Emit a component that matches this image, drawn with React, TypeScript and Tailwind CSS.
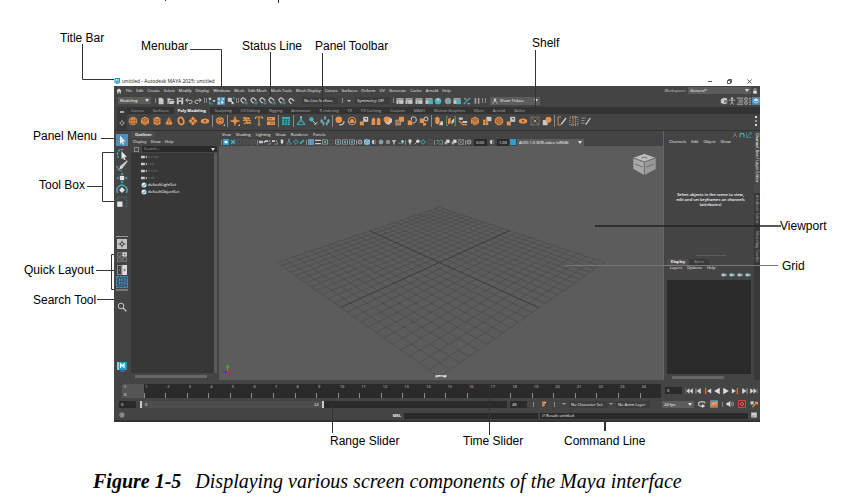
import React from 'react';

const menus = [
  'File', 'Edit', 'Create', 'Select', 'Modify', 'Display', 'Windows', 'Mesh', 'Edit Mesh', 'Mesh Tools',
  'Mesh Display', 'Curves', 'Surfaces', 'Deform', 'UV', 'Generate', 'Cache', 'Arnold', 'Help',
];

const shelfTabs = [
  'Curves', 'Surfaces', 'Poly Modeling', 'Sculpting', 'UV Editing', 'Rigging', 'Animation', 'Rendering',
  'FX', 'FX Caching', 'Custom', 'MASH', 'Motion Graphics', 'XGen', 'Arnold', 'Bullet',
];

const shelfIcons = [
  'sphere', 'cube', 'cylinder', 'cone', 'torus', 'plane', 'disc', '|', 'platonic', '|', 'star', 'curves', 'type',
  'svg', '|', 'table', '|', 'rig', 'joint', 'cluster', '|', 'combine', 'separate', 'extract', 'mirror', 'smooth',
  'boxes', 'bool', 'boolDiff', '|', 'extrude', 'bridge', 'bevel', 'cube', 'merge', 'wheel', 'extract', 'disc',
  'target', 'ballBox', '|', 'cut', 'loop', 'draw',
];

const statusIcons = [
  '|', 'file', 'folder', 'save', 'undo', 'redo', '|', '|', 'hier', '*object', 'component', '|', '|',
  'magnet', 'magnet', 'magnet', 'magnet', 'magnet', 'magnetGrey',
];
const renderIcons = ['|', 'clap', 'clap', 'clap', 'clapTeal', 'globe', 'globeGrey', 'clapTeal', 'brush', 'pause', '|', '|'];

const viewIcons = [
  '|', '*camera', 'xbox', 'dim', 'dim', 'dim', '|', 'cam', 'camTeal', 'camTeal', 'pin', 'rig', 'diamond', 'pencil', '|',
  '*grid', 'film', 'gate', 'dim', 'gate', 'gate', 'gate', '|', 'ring', '*wire', 'half', 'globeGrey', 'ball', 'light',
  'shadow', '|', 'lamp', 'blur', 'diamond', 'dim', '|', 'brush', '|', 'copy', 'copy', 'xgrey', '|', 'ring',
];

const outlinerItems = [
  { name: 'persp', dim: true },
  { name: 'top', dim: true },
  { name: 'front', dim: true },
  { name: 'side', dim: true },
  { name: 'defaultLightSet', dim: false },
  { name: 'defaultObjectSet', dim: false },
];

const O = '#e8914a';
const G = '#c8c8c8';
const T = '#45b5c4';

const glyphs: Record<string, React.ReactNode> = {
  sphere: <><circle cx="5" cy="5" r="4.3" fill={O} /><path d="M1 4q4 2 8 0M1.6 7q3.4 1.5 6.8 0M5 .7v8.6M3 1.2q-1.4 4 0 7.6M7 1.2q1.4 4 0 7.6" stroke="#75502f" strokeWidth=".6" fill="none" /></>,
  cube: <><path d="M5 .6 9 2.7v4.6L5 9.4 1 7.3V2.7z" fill={O} /><path d="M1 2.7 5 5l4-2.3M5 5v4.4M3 1.6l4 2.3v4.4M7 1.6 3 3.9v4.4" stroke="#75502f" strokeWidth=".6" fill="none" /></>,
  cylinder: <><path d="M1.5 2.2q3.5-3 7 0v5.6q-3.5 3-7 0z" fill={O} /><path d="M1.5 2.5q3.5 2.5 7 0M1.5 5q3.5 2.5 7 0M4 3.7v5.7M6.2 3.7v5.7" stroke="#75502f" strokeWidth=".6" fill="none" /></>,
  cone: <><path d="M5 .8 8.6 7.8q-3.6 2.4-7.2 0z" fill={O} /><path d="M3 4.9q2 1.4 4 0M5 1v8" stroke="#75502f" strokeWidth=".6" fill="none" /></>,
  torus: <ellipse cx="5" cy="5" rx="2.6" ry="3.6" fill="none" stroke={O} strokeWidth="1.8" transform="rotate(-18 5 5)" />,
  plane: <><path d="M5 .6 9.4 5 5 9.4.6 5z" fill={O} /><path d="m2.8 2.8 4.4 4.4M7.2 2.8 2.8 7.2" stroke="#5a432f" strokeWidth=".7" /></>,
  disc: <><ellipse cx="5" cy="5" rx="4.2" ry="2.6" fill={O} /><circle cx="5" cy="5" r="1.1" fill="#5a432f" /></>,
  platonic: <><path d="M5 .4 9 2.7 8.5 7 5 9 1.5 7 1 2.7z" fill={O} /><path d="m5 .4-2 4 2 4.6 2-4zM1 2.7l2 1.7h4l2-1.7" stroke="#75502f" strokeWidth=".6" fill="none" /><path d="M10 8v2H8z" fill={G} /></>,
  star: <><path d="M5 .5 6 4l3.5 1L6 6 5 9.5 4 6 .5 5 4 4z" fill={O} stroke={O} strokeWidth=".8" /><path d="M10 8v2H8z" fill={G} /></>,
  curves: <path d="M1 2h4q2 0 3 1M1 4.6q4-1.6 8 .6M2 8q3-2.6 7-.6M2 1l4 7" stroke={O} strokeWidth="1.3" fill="none" />,
  type: <path d="M1.6 1h6.8v2M1.6 1v2M5 1v8M3.6 9h2.8" stroke={O} strokeWidth="1.2" fill="none" />,
  svg: <><path d="M1 1h8v3.4H1zM1 5.6h8V9H1z" fill={O} /><path d="M2 2.7h4M4 7.3h4" stroke="#75502f" strokeWidth=".8" /></>,
  table: <><path d="M1 1h8v8H1z" fill={T} /><path d="M1 3.2h8M1 5.2h8M1 7.2h8M3.7 3v6M6.3 3v6" stroke="#2c4a52" strokeWidth=".7" /></>,
  rig: <><path d="M5 1v4L1 8.5M5 5l4 3.5M1 8.5h8L5 2.6z" stroke={T} strokeWidth=".8" fill="none" /><circle cx="5" cy="1.2" r="1" fill={G} /></>,
  joint: <><circle cx="3.4" cy="3.2" r="2.2" fill={T} /><path d="m5 5 3 3.6M9.4 6l-3 3" stroke={G} strokeWidth="1" /></>,
  cluster: <path d="m5 0 1 2-1 2-1-2zM1.6 3l1.2 2-1.2 2L.4 5zM8.4 3l1.2 2-1.2 2-1.2-2zM3.4 5.6l1 2-1 2-1-2zM6.8 5.6l1 2-1 2-1-2z" fill={T} stroke={G} strokeWidth=".3" />,
  combine: <><circle cx="3.8" cy="3.8" r="3.3" fill={O} /><path d="M4.4 8.6A3.4 3.4 0 0 0 9 5.2" stroke={G} strokeWidth="1.2" fill="none" /></>,
  separate: <><circle cx="5" cy="5" r="3.8" stroke={O} strokeWidth="1" fill="none" /><circle cx="5" cy="5" r="2" fill={O} /><path d="M1 6h8" stroke={G} strokeWidth=".6" /></>,
  extract: <><path d="M4.2.8h5v5h-5z" fill={G} /><path d="M.8 5.4h4v4h-4z" fill={O} /><path d="M5.4 2h2.4v2.6z" fill="#555" /></>,
  mirror: <path d="M.6 3 3 1.4 4.2 3v6H.6zM5.8 3 7 1.4 9.4 3v6H5.8z" fill={O} />,
  smooth: <><path d="M2 3.6 6 1l3 2v3L5.6 9 2 7z" fill={G} /><circle cx="3.6" cy="3.6" r="3" fill={O} /></>,
  boxes: <><path d="M4 .8h5v5H4z" fill={O} /><path d="M.8 4h4.8v5H.8z" fill="#a5703f" stroke={G} strokeWidth=".5" /></>,
  bool: <><path d="M.8 4.4h4.4v4.8H.8z" fill={O} /><path d="M4.4 4V1.4L7 .7l2.2 1.6v3L7 7H5.6" fill="none" stroke={G} strokeWidth="1" /></>,
  boolDiff: <><path d="M.8 2.4h4.4V7H.8zM4 7h3v2.4H4z" fill={O} /><circle cx="7" cy="3" r="2" fill="none" stroke={G} strokeWidth="1" /></>,
  extrude: <><path d="M1.2 2 3.4.6 5.6 2v5L3.4 8.4 1.2 7z" fill={O} /><path d="M5 9.2h4V5.6L7 5z" fill={G} /></>,
  bridge: <><path d="M2 .5H.6v9H2M8 .5h1.4v9H8" stroke="#4fb032" strokeWidth=".9" fill="none" /><path d="M2 3 4.6 1.6v5.6L2 8.4z" fill={O} /><path d="m5.4 5 2.8-3v4l-2.8 2.4z" fill={G} /></>,
  bevel: <><path d="M.8 1.4h4v2.4h-4zM4.4 5h4.8v2H4.4z" fill={G} /><path d="m1 4.6 3.6 4H9" stroke={O} strokeWidth="1.2" fill="none" /></>,
  merge: <><path d="M4.4.8h5v4.4h-5z" fill={G} /><path d="M1 3.6h5.2V9H1z" fill={O} /><path d="M3.6 3.6V9M1 6.2h5" stroke="#75502f" strokeWidth=".5" /></>,
  wheel: <><circle cx="5" cy="5" r="4.3" fill={O} /><circle cx="5" cy="5" r="2.4" fill="none" stroke="#75502f" strokeWidth=".8" /><path d="M5 1v8M1 5h8M2 2l6 6M8 2 2 8" stroke="#75502f" strokeWidth=".4" /></>,
  target: <><path d="M1 1h8v8H1zM1 1l8 8M9 1 1 9" stroke="#8a8a8a" strokeWidth=".6" fill="none" /><path d="M4 4h2v2H4z" fill={O} /></>,
  ballBox: <><path d="M.8 4h4.8v5.2H.8z" fill={G} /><circle cx="6.4" cy="3.8" r="3" fill={O} /></>,
  cut: <><path d="M1 9V1h3M1 9h3" stroke={O} strokeWidth=".9" fill="none" /><path d="m3.4 8.2 5-6.6 1.2 1L5 8.6z" fill={G} /></>,
  loop: <><path d="M1 1h8v8H1z" stroke={G} strokeWidth=".8" strokeDasharray="1 1" fill="none" /><path d="M4 0v10M6.6 0v10" stroke={O} strokeWidth=".7" /></>,
  draw: <><path d="M.6 2h4M.6 4.6h3M.6 7.2h3" stroke={G} strokeWidth="1" strokeDasharray="1 .8" /><path d="m4 8.4 4.8-6.6 1 .8-4.4 6.2z" fill={G} /></>,
  file: <path d="M2 .8h4L8.2 3v6.2H2z" fill={G} />,
  folder: <path d="M.6 1.6h3.2l1 1.2h3.6v1.4H3L1.6 8.6h-1zM3.4 5h6.2L8.2 8.8H2.2z" fill={G} />,
  save: <path d="M1 1h8v8.2H1zm2 .8v2.4h4V1.8zm.4 4v3.4h3.2V5.8z" fill={G} fillRule="evenodd" />,
  undo: <path d="M1 4h5.6q2.4 0 2.4 2T6.6 8H5M3.6 1.6 1 4l2.6 2.4" stroke={G} strokeWidth="1.2" fill="none" />,
  redo: <path d="M9 4H3.4Q1 4 1 6t2.4 2H5M6.4 1.6 9 4 6.4 6.4" stroke={G} strokeWidth="1.2" fill="none" />,
  hier: <><path d="M1 1h3v2.4H1zM6 3.6h3V6H6z" fill={G} /><path d="M2 4v4.6h4" stroke={T} strokeWidth="1" fill="none" /></>,
  object: <><path d="M1 1.4h3v3H1zM6 1.4h3v3H6zM1 6h3v3H1z" fill="#9bd0ea" /><path d="m5 4 4 3.6-2 .2-1 1.6z" fill="#fff" /></>,
  component: <><path d="M1 1h5v5H1z" fill={G} /><path d="m5 4 4.4 4-2.2.2-1 1.4z" fill="#eee" /><path d="M7 1h2v2" stroke={T} fill="none" /></>,
  magnet: <><path d="M2.6 1.4v3.4a2.4 2.4 0 0 0 4.8 0V1.4" fill="none" stroke={G} strokeWidth="1.5" transform="rotate(135 4.6 4)" /><circle cx="7.6" cy="7.4" r="1.5" fill="none" stroke={T} strokeWidth=".9" /></>,
  magnetGrey: <path d="M2.6 1.4v3.4a2.4 2.4 0 0 0 4.8 0V1.4" fill="none" stroke={G} strokeWidth="1.5" transform="rotate(135 5 4.6)" />,
  clap: <><path d="M.6 1.6h8.8v7H.6z" fill={G} /><path d="M.6 3.4h8.8M3.4 5v3.6" stroke="#555" strokeWidth=".8" /></>,
  clapTeal: <><path d="M.6 1.6h8.8v7H.6z" fill={G} /><path d="M4 4h5.6v5H4z" fill={T} /><path d="M.6 3.4h8.8" stroke="#555" strokeWidth=".8" /></>,
  globe: <><circle cx="5" cy="5" r="4.2" fill={T} /><path d="M3 3q2-2 4 0L5 6z" fill={G} /></>,
  globeGrey: <><circle cx="5" cy="5" r="4" fill="#999" /><path d="M2 2.6 8 7.4M2 7l5-5" stroke={T} strokeWidth="1" /></>,
  brush: <><path d="m1 9 3.6-4 4.6-4" stroke={T} strokeWidth="1.4" /><path d="M1.4 2.4h3M5.6 8.4h3" stroke={G} strokeWidth="1.2" /></>,
  pause: <path d="M2 1.4h2v7H2zM6 1.4h2v7H6z" fill="#a0a0a0" />,
  camera: <><path d="M0 0h10v10H0z" fill="#2e9fca" /><path d="M2.6 3h4.8v4H2.6z" fill="#fff" /></>,
  xbox: <><path d="M1 1h8v8H1z" fill="#337a8a" /><path d="m2 2 6 6M8 2 2 8" stroke="#8fd2dc" strokeWidth="1" /></>,
  dim: <path d="M1.6 1.6h6.8v6.8H1.6z" fill="none" stroke="#5c6062" strokeWidth="1.3" />,
  cam: <path d="M0 3h6.4v4H0zM7 5l3-2v4z" fill={G} />,
  camTeal: <><path d="M0 2h5v3H0zM6 3l2.4-1v3z" fill={G} /><path d="M4 8.4h5.6V5" stroke={T} strokeWidth="1.4" fill="none" /></>,
  pin: <path d="M3 1h4v5L5 9 3 6z" fill="#ddd" />,
  diamond: <path d="M5 1 9 5 5 9 1 5z" fill="none" stroke={T} strokeWidth="1.5" />,
  pencil: <path d="m1 9 1-3 5.4-5L9 2.6 4 8z" fill={T} />,
  grid: <path d="M1 1h8v8H1zM3.6 1v8M6.4 1v8M1 3.6h8M1 6.4h8" stroke="#9aa8b4" strokeWidth=".7" fill="none" />,
  film: <path d="M0 1.4h10v2H0zM0 6.6h10v2H0z" fill={G} />,
  gate: <><path d="M.8 1.4h8.4v7.2H.8z" fill="none" stroke={G} strokeWidth="1" /><path d="M3.4 3.4h3.2v3.2H3.4z" fill={T} /></>,
  ring: <><circle cx="5" cy="5" r="3.4" fill="none" stroke={G} strokeWidth="1.3" /><path d="M5 3v4" stroke={G} /></>,
  wire: <path d="M5 1 9 3v4L5 9 1 7V3zM1 3l4 2 4-2M5 5v4" fill="none" stroke="#d8f0f4" strokeWidth="1" />,
  half: <><circle cx="5" cy="5" r="3.8" fill={G} /><path d="M5 1.2a3.8 3.8 0 0 1 0 7.6z" fill="#666" /></>,
  ball: <circle cx="5" cy="5" r="3.8" fill="#8d8d8d" />,
  light: <path d="M1 2h8L6 5.4V9H4V5.4z" fill={G} />,
  shadow: <><path d="M0 6.4h6L9.6 3v4.6H0z" fill={T} /><circle cx="7.4" cy="3.6" r="2" fill={G} /></>,
  lamp: <path d="M2.6 1h4.8v5H6v3H4V6H2.6z" fill="#ddd" />,
  blur: <><circle cx="6.4" cy="3.6" r="2.8" fill="#ddd" /><path d="m1 9 3.4-3.4" stroke={G} strokeWidth="1.6" /></>,
  copy: <><path d="M3.6 1h5.6v5.6H3.6z" fill="#ddd" /><path d="M1 4h4.6v5H1z" fill="#aaa" /></>,
  xgrey: <path d="M1 1h8v8H1zl8 8M9 1 1 9" fill="none" stroke="#a5a5a5" strokeWidth="1" />,
  arrow: <path d="m3 .6 5.4 6-2.4.2 1.2 2.4-1.4.6-1-2.4L3 9z" fill="#e6e6e6" />,
  lasso: <><path d="M6 1.4Q2.4.6 1.4 4T3 8.6" fill="none" stroke={T} strokeWidth="1" strokeDasharray="2 .8" /><path d="m4.6 2.6 4.4 5-2 .2 1 2-1.2.4-.8-2L4.6 9.4z" fill="#e6e6e6" /></>,
  paint: <><path d="M9.4.8 5 6.6 3.6 5.4z" fill={G} stroke={G} /><path d="M.8 5q.2 4 4 3.8" stroke={T} fill="none" strokeWidth="1" strokeDasharray="2 .6" /><path d="M3.6 5.6 5 7 2.6 7.6z" fill="#fff" /></>,
  move: <><path d="M3.2 3.2h3.6v3.6H3.2z" fill="#e4e4e4" /><path d="m5 .2 1.3 1.8H3.7zM5 9.8 6.3 8H3.7zM.2 5 2 3.7v2.6zM9.8 5 8 3.7v2.6z" fill={T} /></>,
  rotate: <><path d="M1.4 7.4A4.2 4.2 0 1 1 8.6 7.4" fill="none" stroke={T} strokeWidth="1.1" /><path d="M5 2.6 7.4 5 5 7.4 2.6 5z" fill="#e4e4e4" /></>,
  scale: <><path d="M1 4.6h4.4V9H1z" fill="#e4e4e4" /><path d="M1 3V1h8v8H7" fill="none" stroke="#3d8f9c" strokeWidth=".6" strokeDasharray="1.4 1" /></>,
  single: <><path d="M0 0h10v10H0z" fill="#c4c4c4" /><path d="M5 1.6v6.8M1.6 5h6.8" stroke="#444" strokeWidth="1" /><circle cx="5" cy="5" r="1.6" fill="#c4c4c4" stroke="#444" /></>,
  four: <><path d="M5.4.2h4.4v4.4H5.4z" fill="#ddd" /><path d="M.6.6h3.6v3.6H.6zM.6 5.8h3.6v3.6H.6zM5.8 5.8h3.6v3.6H5.8z" fill="none" stroke="#8a8a8a" strokeWidth=".8" /><path d="M7.6 1.2v2.4M6.4 2.4h2.4M2.4 1.8v1.2M2.4 7v1.2M7.6 7v1.2" stroke="#666" strokeWidth=".7" /></>,
  two: <><path d="M.5.5h4v9h-4z" fill="none" stroke="#999" strokeWidth=".8" /><path d="M5.2 0H10v10H5.2z" fill="#ddd" /><path d="M2.5 4v2M7.6 3.6v2.8M6.2 5H9" stroke="#777" strokeWidth=".8" /></>,
  outl: <path d="M.5.5h9v9h-9zM3 2v6M5 2v6M7.4 2v6" fill="none" stroke="#4d9bcf" strokeWidth=".8" strokeDasharray="2 .8" />,
  search: <><circle cx="4" cy="4" r="2.8" fill="none" stroke={G} strokeWidth="1" /><path d="m6 6 3.4 3.4" stroke={G} strokeWidth="1.3" /></>,
  maya: <><path d="M0 0h10v8H0z" fill="#1f9ecb" /><path d="M0 0h2v8H0z" fill="#7fd3ec" /><path d="M3.6 6V2l1.7 2L7 2v4" fill="none" stroke="#fff" strokeWidth="1.2" /><path d="M3 8.6h5v1.2H3z" fill="#2b86a8" /></>,
  home: <path d="M5 .8.6 5H2v4.2h2V6h2v3.2h2V5h1.4z" fill="#e4e4e4" />,
  gear: <><circle cx="5" cy="5" r="2.7" fill="none" stroke="#999" strokeWidth="1.6" /><path d="M5 0v2M5 8v2M0 5h2M8 5h2" stroke="#999" strokeWidth="1.4" /></>,
  lock: <><path d="M2 4.4h6v5H2z" fill="#ddd" /><path d="M3.2 4.4V1.4h3.6v3" fill="none" stroke="#ddd" /></>,
  cubeGrey: <><path d="M1 3 4.4 1 9 1.8v6L5.6 9 1 7.6z" fill={G} /><path d="M5 4h4v3H5z" fill="#777" /></>,
  person: <><circle cx="5" cy="1.8" r="1.4" fill={G} /><path d="M1 4h8M5 3v3L3 9.6M5 6l2 3.6" stroke={G} fill="none" /></>,
  list: <path d="M1 1.4h8M3 4h6M3 6.4h6M1 9h8" stroke={G} strokeWidth="1" />,
  sliders: <path d="M1 1h3v3H1zM1 6h3v3H1zM6 1.6h3M6 4h3M6 6.4h3M6 9h3" stroke={G} strokeWidth=".9" fill="none" />,
  layers: <><path d="m5 1.6 4 2-4 2-4-2z" fill="#cfe8f2" /><path d="m1 5.6 4 2 4-2" stroke="#cfe8f2" fill="none" /></>,
  user: <><circle cx="5" cy="3" r="2.2" fill={G} /><path d="M1.4 9.4Q1.6 5.6 5 5.6t3.6 3.8" fill="none" stroke={G} strokeWidth="1.2" /></>,
  axis: <><path d="M5 5V1" stroke="#5a8fd8" strokeWidth="1.6" /><path d="M5 5 1.4 8.6" stroke="#52b043" strokeWidth="1.6" /><path d="m5 5 4 3.6" stroke="#d94c3c" strokeWidth="1.6" /></>,
  arc: <path d="M1.6 8.6V5.4q.6-3.2 3.4-3.2t3.4 3.2v3.2" fill="none" stroke={T} strokeWidth="2" />,
  slope: <path d="M1 1v8h8M2 8l6.600-6.600M5.600 1.200h3v3" fill="none" stroke={T} strokeWidth="1" />,
  layerAdd: <><ellipse cx="4" cy="5" rx="3.6" ry="2.4" fill={G} /><path d="M6 3h3.6v4H6z" fill={T} /></>,
  first: <path d="M1 1.6v6.8M5.4 2v6L2 5zM9.6 2v6L6 5z" fill="#ddd" stroke="#ddd" strokeWidth=".4" />,
  prev: <path d="M2.500 1.600v6.800M8 2v6L4 5z" fill="#ddd" stroke="#ddd" strokeWidth=".8" />,
  prevKey: <><path d="M2 1v8" stroke="#d9703a" strokeWidth="1.6" /><path d="M9 2v6L4 5z" fill="#ddd" /></>,
  back: <path d="M8.4 1v8L1.4 5z" fill="#ddd" />,
  play: <path d="M1.6 1v8l7-4z" fill="#ddd" />,
  nextKey: <><path d="M8 1v8" stroke="#d9703a" strokeWidth="1.6" /><path d="M1 2v6l5-3z" fill="#ddd" /></>,
  next: <path d="M7.500 1.600v6.800M2 2v6l4-3z" fill="#ddd" stroke="#ddd" strokeWidth=".8" />,
  last: <path d="M9 1.6v6.8M4.6 2v6L8 5zM.4 2v6L4 5z" fill="#ddd" stroke="#ddd" strokeWidth=".4" />,
  loopPlay: <><path d="M6 7.6H3.2A2.4 2.4 0 0 1 3.2 2.4h4A2 2 0 0 1 9 4.4" fill="none" stroke={G} strokeWidth="1.4" /><path d="M5 5v5l4-2.5z" fill="#ddd" /></>,
  cache: <><path d="M.6 1.6h8.8v7H.6z" fill="#d9803f" /><path d="m2 6 2.4-2 1.6 1 3-3" stroke="#ddd" fill="none" strokeWidth="1" /></>,
  sound: <><path d="M.6 3.4h2L5.4 1v8L2.6 6.6h-2z" fill="#ddd" /><path d="M6.8 3q1.4 2 0 4M8.4 2q2 3 0 6" fill="none" stroke={G} strokeWidth=".8" /></>,
  autoKey: <><path d="M.6.6h8.8v8.8H.6z" fill="#6b2d2d" stroke="#e0473f" strokeWidth="1.2" /><circle cx="5" cy="5" r="2" fill="none" stroke="#e98a84" strokeWidth=".9" /></>,
  prefs: <><path d="M.6 1.6h4v4h-4z" fill={G} /><path d="m3 9 6-6.4M6 3h3.4v3" stroke={O} strokeWidth="1.5" fill="none" /></>,
  mark: <><path d="M1.6.8h5.8L5.6 9H1.6z" fill="#e07b3c" /><path d="M6 1l3 1-2 2z" fill="#ddd" /></>,
  script: <><path d="M.4.8h9.2v8.4H.4z" fill="#d0d0d0" /><path d="M2 6.4h6M2 8h3" stroke="#777" strokeWidth=".8" /></>,
  help: <><circle cx="5" cy="5" r="3.8" fill="#6b6b6b" stroke="#b5b5b5" strokeWidth="1" /><path d="M5 3v4" stroke="#ddd" strokeWidth="1.2" /></>,
  check: <><circle cx="5" cy="5" r="4.2" fill="#dfe8ea" /><path d="m2.6 5 2 2.2L8.6 2" stroke="#3f97a8" strokeWidth="1.6" fill="none" /></>,
};

const sizes = {
  xs: 'size-[6px]',
  sm: 'size-[8px]',
  md: 'size-[10px]',
  lg: 'size-[12px]',
};

function Icon({ name, size = 'md' }: { name: string; size?: keyof typeof sizes }) {
  return (
    <svg viewBox="0 0 10 10" className={`shrink-0 ${sizes[size]}`} aria-hidden="true">
      {glyphs[name]}
    </svg>
  );
}

function IconButton({ name, size = 'md' }: { name: string; size?: keyof typeof sizes }) {
  if (name === '|') return <span className="h-[5px] w-px shrink-0 bg-[#8a8a8a]" />;
  const active = name.startsWith('*');
  const icon = active ? name.slice(1) : name;
  return (
    <button type="button" aria-label={icon} className={active ? 'bg-[#4a86b0]' : ''}>
      <Icon name={icon} size={size} />
    </button>
  );
}

function Caret() {
  return <span className="pointer-events-none border-x-2 border-t-[3px] border-x-transparent border-t-[#ddd]" />;
}

function Select({ label, value, className }: { label: string; value: string; className: string }) {
  return (
    <div className={`flex h-[7px] items-center bg-[#5c5c5c] pr-[2px] ${className}`}>
      <select aria-label={label} defaultValue={value} className="min-w-0 flex-1 appearance-none bg-transparent pl-[2px] text-[4px] leading-[7px] text-white outline-none">
        <option>{value}</option>
      </select>
      <Caret />
    </div>
  );
}

function Field({ label, value, className, flat }: { label: string; value: string; className: string; flat?: boolean }) {
  return (
    <input
      aria-label={label}
      defaultValue={value}
      className={`h-[7px] min-w-0 px-[2px] text-[4px] leading-[7px] outline-none ${flat ? 'bg-[#3c3c3c]' : 'bg-[#2a2a2a]'} ${className}`}
    />
  );
}

function StatusLine() {
  return (
    <div className="flex h-[11px] items-center pl-[4px]">
      <Select label="Menu set" value="Modeling" className="w-[33px]" />
      <div className="flex w-[144px] items-center justify-between pl-[4px]">
        {statusIcons.map((name, i) => <IconButton key={i} name={name} size="sm" />)}
      </div>
      <Field flat label="Live surface" value="No Live Surface" className="ml-[7px] w-[36px]" />
      <div className="ml-[4px] flex items-center gap-[4px]">
        <IconButton name="|" />
        <span className="border-x-2 border-t-2 border-x-transparent border-t-[#bbb]" />
        <Field flat label="Symmetry" value="Symmetry: Off" className="w-[34px]" />
      </div>
      <div className="ml-[4px] flex w-[93px] items-center justify-between">
        {renderIcons.map((name, i) => <IconButton key={i} name={name} size="sm" />)}
      </div>
      <button type="button" className="ml-[4px] flex h-[8px] w-[50px] items-center gap-[2px] bg-[#5c5c5c] px-[2px] text-[4px]">
        <Icon name="user" size="xs" />
        <span className="mr-auto whitespace-nowrap text-white">Sham Tickoo</span>
        <Caret />
      </button>
      <div className="ml-auto flex items-center">
        {['cubeGrey', 'person', 'list', 'sliders', '*layers'].map((name) => <IconButton key={name} name={name} size="sm" />)}
      </div>
    </div>
  );
}

function Shelf() {
  return (
    <div className="flex h-[24px] pt-px">
      <div className="ml-[3px] flex w-[10px] flex-col items-center justify-between bg-[#393939] py-[4px]">
        <span className="h-[2px] w-[4px] bg-[#aaa]" />
        <Icon name="gear" size="xs" />
      </div>
      <div className="flex-1">
        <div className="flex h-[7px] items-end gap-px bg-[#333] text-[4px] leading-[7px] text-[#b0b0b0]">
          {shelfTabs.map((tab) => (
            <button
              key={tab}
              type="button"
              className={`h-[7px] whitespace-nowrap px-[4px] ${tab === 'Poly Modeling' ? 'bg-[#444] font-bold text-white' : ''}`}
            >
              {tab}
            </button>
          ))}
        </div>
        <div className="flex h-[14px] items-center gap-[2px] pl-px">
          {shelfIcons.map((name, i) =>
            name === '|' ? <span key={i} className="h-[12px] w-px bg-[#8a8a8a]" /> : <IconButton key={i} name={name} />,
          )}
          <div className="ml-auto mr-[3px] flex flex-col gap-[2px]">
            <span className="size-[2px] bg-[#ddd]" />
            <span className="size-[2px] bg-[#999]" />
            <span className="size-[2px] bg-[#ddd]" />
          </div>
        </div>
      </div>
    </div>
  );
}

function ToolBox() {
  return (
    <div className="flex w-[15px] flex-col items-center pt-[3px]">
      <button type="button" aria-label="Select" className="flex size-[12px] shrink-0 items-center justify-center bg-[#4f8ebd]">
        <Icon name="arrow" />
      </button>
      <div className="mt-[2px] flex flex-col">
        {['lasso', 'paint', 'move', 'rotate', 'scale'].map((name) => <IconButton key={name} name={name} size="lg" />)}
      </div>
      <span className="mt-[28px] h-px w-[12px] bg-[#999]" />
      <div className="mt-[2px] flex flex-col gap-[3px]">
        {['single', 'four', 'two'].map((name) => <IconButton key={name} name={name} />)}
      </div>
      <button type="button" aria-label="Outliner layout" className="mt-[1px] bg-[#375a75]"><Icon name="outl" size="lg" /></button>
      <span className="mt-[1px] h-[2px] w-[12px] bg-[#777]" />
      <div className="mt-[3px]"><IconButton name="search" /></div>
      <div className="mt-auto mb-[2px]"><IconButton name="maya" /></div>
    </div>
  );
}

function Outliner() {
  return (
    <section className="flex w-[90px] flex-col px-[2px]">
      <h2 className="w-[24px] bg-[#4d4d4d] pl-[4px] text-[4px] leading-[7px] font-bold">Outliner</h2>
      <div className="flex gap-[4px] bg-[#444] pl-[2px] text-[4px] leading-[7px]">
        <button type="button">Display</button>
        <button type="button">Show</button>
        <button type="button">Help</button>
      </div>
      <div className="flex items-center gap-[3px] py-[1px] pl-[3px]">
        <span className="size-[5px] border border-dashed border-[#888]" />
        <div className="flex flex-1 items-center bg-[#2a2a2a] pr-[2px]">
          <input type="search" aria-label="Search" placeholder="Search..." className="h-[6px] min-w-0 flex-1 bg-transparent pl-[2px] text-[4px] leading-[6px] placeholder:text-[#aaa]" />
          <Caret />
        </div>
      </div>
      <div className="flex flex-1 bg-[#373737]">
        <ul className="flex-1 pl-[10px] text-[4px] leading-[7px]">
          {outlinerItems.map((item) => (
            <li key={item.name} className={`flex h-[7px] items-center gap-[1px] ${item.dim ? 'text-[#727272]' : 'text-white'}`}>
              <Icon name={item.dim ? 'cam' : 'check'} size="xs" />
              {item.name}
            </li>
          ))}
        </ul>
        <div className="w-[3px] bg-[#5a5a5a]" />
      </div>
      <div className="flex h-[7px] items-center pr-[10px] pl-[4px]">
        <span className="h-[3px] flex-1 bg-[#666]" />
      </div>
    </section>
  );
}

type Point = [number, number];

// Maps the unit square onto the quad (top, right, bottom, left) in perspective.
function project(top: Point, right: Point, bottom: Point, left: Point) {
  const dx1 = right[0] - bottom[0];
  const dx2 = left[0] - bottom[0];
  const dx3 = top[0] - right[0] + bottom[0] - left[0];
  const dy1 = right[1] - bottom[1];
  const dy2 = left[1] - bottom[1];
  const dy3 = top[1] - right[1] + bottom[1] - left[1];
  const den = dx1 * dy2 - dx2 * dy1;
  const g = (dx3 * dy2 - dx2 * dy3) / den;
  const h = (dx1 * dy3 - dx3 * dy1) / den;
  return (u: number, v: number): Point => {
    const w = g * u + h * v + 1;
    return [
      ((right[0] - top[0] + g * right[0]) * u + (left[0] - top[0] + h * left[0]) * v + top[0]) / w,
      ((right[1] - top[1] + g * right[1]) * u + (left[1] - top[1] + h * left[1]) * v + top[1]) / w,
    ];
  };
}

const CELLS = 24;

function Grid() {
  const at = project([221, 61], [385, 116], [221, 230], [59, 116]);
  const lines = Array.from({ length: CELLS + 1 }, (_, i) => i / CELLS);
  return (
    <svg viewBox="0 0 445 233" preserveAspectRatio="xMidYMid slice" className="h-full w-full">
      {lines.map((t) => {
        const [a, b, c, d] = [at(t, 0), at(t, 1), at(0, t), at(1, t)];
        const stroke = t === 0.5 ? '#333' : '#484848';
        return (
          <path key={t} d={`M${a}L${b}M${c}L${d}`} stroke={stroke} strokeWidth={t === 0.5 ? 0.8 : 0.6} />
        );
      })}
      <path d="M10 225v-6m-1.500 1.500 1.500-2 1.500 2" stroke="#27c227" fill="none" />
      <path d="M10 225h4" stroke="#d03030" strokeWidth="1.5" />
      <path d="M10 225H6" stroke="#3a3ad0" strokeWidth="1.5" />
      <path d="m425 8 11 4v11l-11 6-11-6V12z" fill="#a8a8a8" />
      <path d="m425 8 11 4-11 4-11-4z" fill="#bdbdbd" />
      <path d="m425 16 11-4v11l-11 6z" fill="#9a9a9a" />
      <path d="m414 12 11 4 11-4M425 16v13" stroke="#6a6a6a" fill="none" />
      <path d="m416 18 7 3M427 21l7-3M422 12l3-1 3 1" stroke="#666" fill="none" strokeWidth=".9" />
    </svg>
  );
}

function Viewport() {
  return (
    <section className="flex min-w-0 flex-1 flex-col border-r border-[#666]">
      <div className="flex gap-[5px] pl-[3px] text-[4px] leading-[7px]">
        {['View', 'Shading', 'Lighting', 'Show', 'Renderer', 'Panels'].map((item) => (
          <button key={item} type="button">{item}</button>
        ))}
      </div>
      <div className="flex h-[8px] items-center">
        <div className="flex w-[254px] items-center justify-between pl-[2px]">
          {viewIcons.map((name, i) => <IconButton key={i} name={name} size="xs" />)}
        </div>
        <Field label="Exposure" value="0.00" className="ml-[1px] w-[13px]" />
        <div className="mx-[2px] flex"><Icon name="half" size="xs" /></div>
        <Field label="Gamma" value="1.00" className="w-[12px]" />
        <span className="mx-px size-[6px] bg-[#2e9fca]" />
        <Select label="View transform" value="ACES 1.0 SDR-video (sRGB)" className="w-[67px]" />
      </div>
      <div className="relative min-h-0 flex-1 bg-[#5c5c5c]">
        <Grid />
        <span className="absolute bottom-0 left-1/2 -translate-x-1/2 text-[4px] leading-[8px] font-bold text-white">persp</span>
      </div>
    </section>
  );
}

function ChannelBox() {
  return (
    <aside className="flex w-[96px]">
      <div className="flex flex-1 flex-col pl-[3px]">
        <div className="flex justify-end gap-[1px] pt-px pr-[2px]">
          <Icon name="axis" size="xs" />
          <Icon name="arc" size="xs" />
          <Icon name="slope" size="xs" />
        </div>
        <div className="flex gap-[5px] pl-[2px] text-[4px] leading-[7px]">
          {['Channels', 'Edit', 'Object', 'Show'].map((item) => (
            <button key={item} type="button">{item}</button>
          ))}
        </div>
        <p className="mx-[8px] mt-[47px] text-center text-[4px] leading-[5px] font-semibold text-white">
          Select objects in the scene to view, edit and set keyframes on channels (attributes)
        </p>
        <div className="mx-auto mt-auto h-px w-[30px] bg-[#5c5c5c]" />
        <div className="mt-[3px] flex text-[4px] leading-[6px]">
          <button type="button" className="w-[22px] bg-[#4d4d4d] font-bold">Display</button>
          <button type="button" className="w-[20px] bg-[#3a3a3a] text-[#999]">Anim</button>
        </div>
        <div className="flex gap-[5px] pl-[3px] text-[4px] leading-[6px]">
          {['Layers', 'Options', 'Help'].map((item) => (
            <button key={item} type="button">{item}</button>
          ))}
        </div>
        <div className="flex h-[8px] items-center justify-end gap-[2px] pr-[3px]">
          {[1, 2, 3, 4].map((n) => <IconButton key={n} name="layerAdd" size="xs" />)}
        </div>
        <div className="mt-[1px] mr-[3px] h-[94px] bg-[#2a2a2a]" />
        <div className="flex h-[6px] items-center pl-[5px]">
          <span className="h-[3px] w-[52px] bg-[#666]" />
        </div>
      </div>
      <div className="flex w-[6px] flex-col gap-[2px] bg-[#383838] text-[4px] leading-[6px] whitespace-nowrap text-[#aaa]">
        <button type="button" className="h-[62px] bg-[#4a4a4a] pt-[2px] text-left text-white [writing-mode:vertical-rl]">Channel Box / Layer Editor</button>
        <button type="button" className="h-[34px] text-left [writing-mode:vertical-rl]">Attribute Editor</button>
        <button type="button" className="h-[36px] text-left [writing-mode:vertical-rl]">Modeling Toolkit</button>
      </div>
    </aside>
  );
}

function TimeSlider() {
  const frames = Array.from({ length: 25 }, (_, i) => i);
  return (
    <div className="mt-[3px] flex h-[15px] items-center">
      <div className="ml-[8px] flex h-[14px] flex-1 bg-[#2a2a2a] text-[4px] leading-[6px] text-[#ccc]">
        {frames.map((frame) => (
          <div key={frame} className={`flex flex-1 flex-col justify-between ${frame === 0 ? 'bg-[#555]' : ''}`}>
            <span className="pl-[2px]">{frame}</span>
            {frame === 0 ? <span className="pl-[2px] text-white">0</span> : <span className="h-[5px] border-l border-[#8a8a8a]" />}
          </div>
        ))}
      </div>
      <Field label="Current frame" value="0" className="ml-[4px] w-[17px]" />
      <div className="ml-[3px] flex w-[75px] justify-between pr-[2px]">
        {['first', 'prev', 'prevKey', 'back', 'play', 'nextKey', 'next', 'last'].map((name) => (
          <IconButton key={name} name={name} size="sm" />
        ))}
      </div>
    </div>
  );
}

function RangeSlider() {
  return (
    <div className="mt-[2px] flex h-[8px] items-center text-[4px]">
      <Field label="Animation start" value="0" className="ml-[5px] w-[17px]" />
      <div className="ml-[4px] flex h-[7px] flex-1 bg-[#2a2a2a] leading-[7px]">
        <div className="flex w-1/2 bg-[#4d4d4d]">
          <span className="w-[2px] bg-[#ccc]" />
          <span className="pl-[3px]">0</span>
          <span className="ml-auto pr-[3px]">24</span>
          <span className="w-[2px] bg-[#ccc]" />
        </div>
      </div>
      <Field label="Animation end" value="48" className="ml-[3px] w-[17px]" />
      <div className="ml-[6px] flex items-center gap-[7px]">
        <IconButton name="|" />
        <IconButton name="mark" size="xs" />
        <IconButton name="|" />
      </div>
      <span className="ml-[7px] border-x-2 border-t-2 border-x-transparent border-t-[#999]" />
      <Field flat label="Character set" value="No Character Set" className="ml-[3px] w-[38px]" />
      <span className="ml-[2px] border-x-2 border-t-2 border-x-transparent border-t-[#999]" />
      <Field flat label="Anim layer" value="No Anim Layer" className="ml-[3px] w-[34px]" />
      <div className="mr-[6px] ml-[6px]"><IconButton name="|" /></div>
      <Select label="Frame rate" value="24 fps" className="w-[32px]" />
      <div className="mr-[2px] ml-[4px] flex w-[60px] items-center justify-between">
        {['loopPlay', '*cache', '|', 'sound', 'autoKey', 'prefs'].map((name) => (
          <IconButton key={name} name={name} size="sm" />
        ))}
      </div>
    </div>
  );
}

function MayaWindow() {
  return (
    <div>
      <div className="flex h-[10px] items-center bg-white text-[#111]">
        <Icon name="maya" size="xs" />
        <h1 className="ml-[2px] text-[5px] leading-[10px] whitespace-nowrap">untitled - Autodesk MAYA 2025: untitled</h1>
        <div className="mr-[8px] ml-auto flex items-center gap-[15px]">
          <button type="button" aria-label="Minimize" className="h-px w-[4px] bg-[#555]" />
          <button type="button" aria-label="Restore">
            <svg viewBox="0 0 5 5" className="size-[5px]"><path d="M.5 1.500h3v3h-3zM1.500 1.500v-1h3v3h-1" fill="none" stroke="#333" strokeWidth=".8" /></svg>
          </button>
          <button type="button" aria-label="Close">
            <svg viewBox="0 0 5 5" className="size-[5px]"><path d="m.5.5 4 4m0-4-4 4" stroke="#333" strokeWidth=".8" /></svg>
          </button>
        </div>
      </div>
      <div className="border-b-2 border-[#333] bg-[#444] text-[#f0f0f0]">
        <nav className="flex h-[9px] items-center gap-[4px] pl-[2px] text-[4px] leading-[9px] whitespace-nowrap">
          <IconButton name="home" size="xs" />
          {menus.map((menu) => <button key={menu} type="button">{menu}</button>)}
          <div className="ml-auto flex items-center gap-[2px] text-[#ccc]">
            Workspace:
            <Select label="Workspace" value="General*" className="w-[63px]" />
          </div>
          <div className="mr-[2px] -ml-[3px] flex"><Icon name="lock" size="xs" /></div>
        </nav>
        <StatusLine />
        <Shelf />
        <div className="flex h-[250px] border-t border-[#333]">
          <ToolBox />
          <Outliner />
          <Viewport />
          <ChannelBox />
        </div>
        <TimeSlider />
        <RangeSlider />
        <div className="mt-[4px] flex h-[8px] items-center text-[4px]">
          <div className="ml-[5px]"><IconButton name="help" size="xs" /></div>
          <label htmlFor="mel" className="mr-[3px] ml-auto font-bold">MEL</label>
          <input id="mel" className="h-[6px] w-[134px] bg-[#2a2a2a]" />
          <output className="ml-[2px] h-[6px] w-[208px] bg-[#2a2a2a] pl-[2px] leading-[6px]">// Result: untitled</output>
          <div className="mx-[3px]"><IconButton name="script" size="xs" /></div>
        </div>
      </div>
    </div>
  );
}

const callouts = [
  { text: 'Title Bar', place: 'left-[60px] top-[31px]' },
  { text: 'Menubar', place: 'left-[141px] top-[39px]' },
  { text: 'Status Line', place: 'left-[242px] top-[39px]' },
  { text: 'Panel Toolbar', place: 'left-[315px] top-[39px]' },
  { text: 'Shelf', place: 'left-[532px] top-[36px]' },
  { text: 'Panel Menu', place: 'left-[33px] top-[129px]' },
  { text: 'Tool Box', place: 'left-[39px] top-[178px]' },
  { text: 'Quick Layout', place: 'left-[24px] top-[263px]' },
  { text: 'Search Tool', place: 'left-[33px] top-[293px]' },
  { text: 'Viewport', place: 'left-[780px] top-[219px]' },
  { text: 'Grid', place: 'left-[782px] top-[259px]' },
  { text: 'Range Slider', place: 'left-[330px] top-[434px]' },
  { text: 'Time Slider', place: 'left-[463px] top-[434px]' },
  { text: 'Command Line', place: 'left-[564px] top-[434px]' },
];

export default function App() {
  return (
    <figure className="relative min-h-screen bg-white pt-[76px] pr-[101px] pl-[114px] font-['Open_Sans','Noto_Sans',sans-serif]">
      <MayaWindow />

      {/* Callout labels and their leader lines */}
      {callouts.map(({ text, place }) => (
        <span key={text} className={`absolute font-['Liberation_Sans',Arial,sans-serif] text-[12px] leading-[14px] whitespace-nowrap text-black ${place}`}>
          {text}
        </span>
      ))}
      <svg viewBox="0 0 861 497" className="pointer-events-none absolute top-0 left-0 h-[497px] w-[861px]" fill="none" stroke="#333">
        <path d="M82.500 44v35.500H114M190 49.500h31.500V86M270.500 52v44M322.500 53v60M535.500 50v66" />
        <path d="M101 138.500h13M87 186.500h15M114 152.500h-11.500v49H114M96 270.500h18M114 254.500h-2.500v35h2.500M97 299.500h17" />
        <path d="M332.500 404v29M489.500 384v51" />
        <path d="M605 422v9" strokeWidth="2" />
        <path d="M595 226h186" stroke="#222" strokeWidth="1.5" />
        <path d="M565 265.500h213" stroke="#777" />
        <path d="M278.500 0v3M165.500 0v1" />
      </svg>

      <figcaption className="-ml-[21px] mt-[44px] font-['Liberation_Serif','Times_New_Roman',serif] text-[20px] leading-[30px] whitespace-nowrap text-black italic">
        <strong className="mr-[14px]">Figure 1-5</strong>
        Displaying various screen components of the Maya interface
      </figcaption>
    </figure>
  );
}
